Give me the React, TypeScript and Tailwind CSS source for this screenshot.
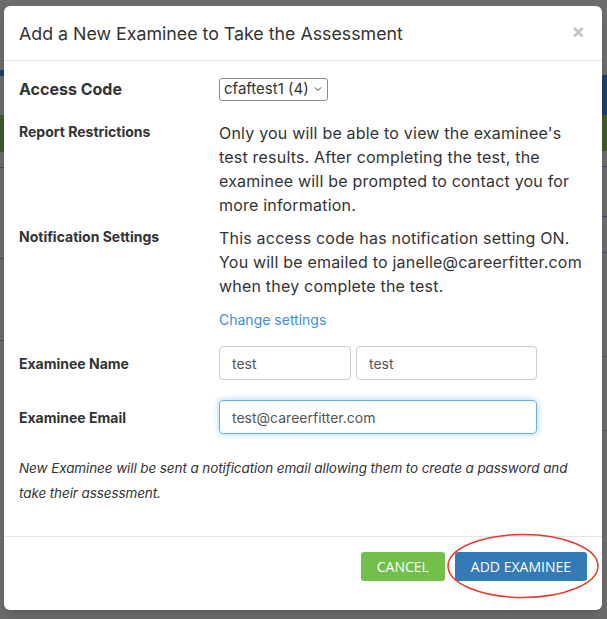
import React, { useState } from 'react';

function App() {
  const [firstName, setFirstName] = useState('test');
  const [lastName, setLastName] = useState('test');
  const [email, setEmail] = useState('test@careerfitter.com');

  return (
    <div className="relative w-[607px] h-[619px] overflow-hidden bg-[#6b6b6b] px-[4px] pt-[6px] font-['Inter',sans-serif]">
      {/* page behind the overlay */}
      <div className="absolute left-0 top-[70px] w-[4px] h-[6px] bg-[#1d3f66]" />
      <div className="absolute left-0 top-[115px] w-[4px] h-[37px] bg-[#3f5a2a]" />
      <div className="absolute left-0 top-[167px] w-[4px] h-px bg-[#2e4d73]" />
      <div className="absolute left-0 top-[258px] w-[4px] h-px bg-[#2e4d73]" />
      <div className="absolute left-0 top-[340px] w-[4px] h-px bg-[#2e4d73]" />
      <div className="absolute right-0 top-[75px] w-[5px] h-[40px] bg-[#1d3f66]" />
      <div className="absolute right-0 top-[115px] w-[5px] h-[36px] bg-[#3f5a2a]" />
      <div className="absolute right-0 top-[166px] w-[5px] h-px bg-[#2e4d73]" />
      <div className="absolute right-0 top-[216px] w-[5px] h-px bg-[#2e4d73]" />
      <div className="absolute right-0 top-[252px] w-[5px] h-px bg-[#2e4d73]" />
      <div className="absolute right-0 top-[356px] w-[5px] h-px bg-[#555]" />
      <div className="absolute right-0 top-[430px] w-[5px] h-px bg-[#555]" />

      <div className="relative w-[598px] bg-white rounded-[6px] shadow-lg">
        {/* Header */}
        <div className="flex items-center justify-between h-[55px] px-[15px] border-b border-[#e5e5e5]">
          <h4 className="text-[17.8px] text-[#333] pt-[2px]">
            Add a New Examinee to Take the Assessment
          </h4>
          <button className="text-[#c4c4c4] text-[20px] font-bold leading-none mr-[2px] -mt-[5px]">×</button>
        </div>

        {/* Body */}
        <div className="px-[15px] pt-[16px] pb-[30px] text-[#333]">
          <div className="flex items-center">
            <div className="w-[200px] text-[16px] font-bold">Access Code</div>
            <div className="flex items-center h-[23px] border border-[#8a8a8a] rounded-[3px] pl-[4px] pr-[4px] text-[15px]">
              <span>cfaftest1 (4)</span>
              <svg width="10" height="10" viewBox="0 0 10 10" className="ml-[4px]">
                <path d="M2 3.5 L5 6.5 L8 3.5" fill="none" stroke="#333" strokeWidth="1" />
              </svg>
            </div>
          </div>

          <div className="flex mt-[20px]">
            <div className="w-[200px] text-[14px] font-bold">Report Restrictions</div>
            <div className="flex-1 text-[16px] leading-[24px] tracking-[0.2px] pr-[8px]">
              Only you will be able to view the examinee's test results. After completing the test, the examinee will be prompted to contact you for more information.
            </div>
          </div>

          <div className="flex mt-[9px]">
            <div className="w-[200px] text-[14px] font-bold">Notification Settings</div>
            <div className="flex-1 text-[16px] leading-[24px] tracking-[0.2px]">
              <p>This access code has notification setting ON. You will be emailed to janelle@careerfitter.com when they complete the test.</p>
              <a href="#" className="block mt-[10px] text-[14px] tracking-normal text-[#3d8fd6]">Change settings</a>
            </div>
          </div>

          <div className="flex items-center mt-[14px]">
            <div className="w-[200px] text-[14px] font-bold">Examinee Name</div>
            <div className="flex gap-[5px]">
              <input
                value={firstName}
                onChange={(e) => setFirstName(e.target.value)}
                className="w-[132px] h-[34px] px-[12px] border border-[#ccc] rounded-[4px] text-[14px] text-[#555] outline-none"
              />
              <input
                value={lastName}
                onChange={(e) => setLastName(e.target.value)}
                className="w-[181px] h-[34px] px-[12px] border border-[#ccc] rounded-[4px] text-[14px] text-[#555] outline-none"
              />
            </div>
          </div>

          <div className="flex items-center mt-[20px]">
            <div className="w-[200px] text-[14px] font-bold">Examinee Email</div>
            <input
              value={email}
              onChange={(e) => setEmail(e.target.value)}
              className="w-[318px] h-[34px] px-[12px] border border-[#66afe9] rounded-[4px] text-[14px] text-[#555] outline-none shadow-[0_0_6px_rgba(102,175,233,0.6)]"
            />
          </div>

          <p className="mt-[22px] text-[13.5px] italic leading-[25px] tracking-[-0.1px] text-[#333]">
            New Examinee will be sent a notification email allowing them to create a password and take their assessment.
          </p>
        </div>

        {/* Footer */}
        <div className="relative flex justify-end gap-[10px] border-t border-[#e5e5e5] px-[15px] pt-[15px] pb-[29px] font-['Open_Sans',sans-serif]">
          <button className="h-[29px] px-[16px] rounded-[3px] bg-[#72c04b] text-white text-[14px]">CANCEL</button>
          <button className="h-[29px] px-[16px] rounded-[3px] bg-[#337ab7] text-white text-[14px]">ADD EXAMINEE</button>
          <svg className="absolute right-[2px] -top-[4px] w-[154px] h-[68px]" viewBox="0 0 154 68">
            <ellipse cx="77" cy="33" rx="75" ry="31.5" fill="none" stroke="#e8392a" strokeWidth="1.5" />
          </svg>
        </div>
      </div>
    </div>
  );
}

export default App;
